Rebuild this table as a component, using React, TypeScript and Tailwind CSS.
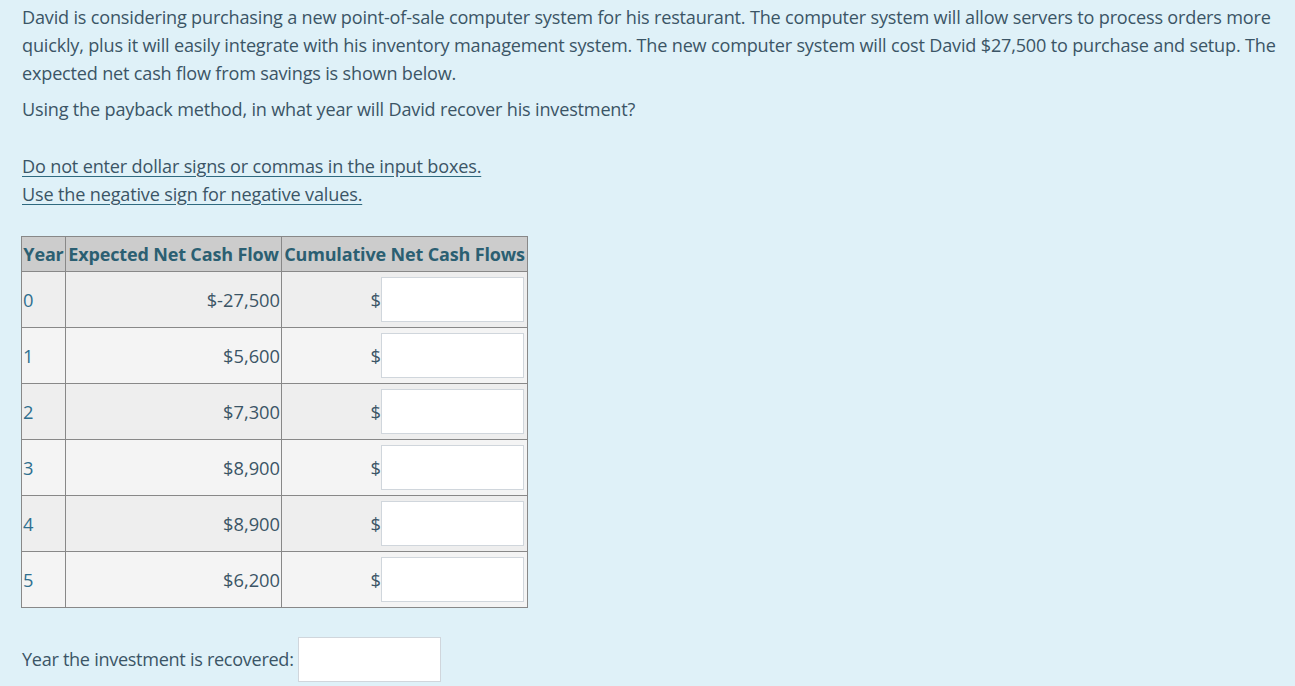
import React from "react";

const rows = [
  { y: "0", v: "$-27,500" },
  { y: "1", v: "$5,600" },
  { y: "2", v: "$7,300" },
  { y: "3", v: "$8,900" },
  { y: "4", v: "$8,900" },
  { y: "5", v: "$6,200" },
];

export default function App() {
  return (
    <div
      className="w-[1295px] h-[686px] overflow-hidden bg-[#dff1f8] text-[#3b5566] pl-[22px] pt-[3px]"
      style={{ fontFamily: '"Open Sans", "Noto Sans", sans-serif' }}
    >
      <p className="text-[18.1px] leading-[28px] tracking-[-0.19px]">
        David is considering purchasing a new point-of-sale computer system for his restaurant. The computer system will allow servers to process orders more quickly, plus it will easily integrate with his inventory management system. The new computer system will cost David $27,500 to purchase and setup. The expected net cash flow from savings is shown below.
      </p>
      <p className="mt-[8px] text-[18.1px] leading-[28px] tracking-[-0.19px]">
        Using the payback method, in what year will David recover his investment?
      </p>
      <div className="mt-[29px] text-[18.1px] leading-[28px] tracking-[-0.17px] underline decoration-[#2f6a80] underline-offset-[3px]">
        <div>Do not enter dollar signs or commas in the input boxes.</div>
        <div>Use the negative sign for negative values.</div>
      </div>
      <table className="mt-[28px] -ml-[1px] border-collapse border border-[#888] text-[18.3px]">
        <thead>
          <tr className="bg-[#cccccc] text-[#2b5f72] font-bold h-[35px] text-[18px] tracking-[-0.15px]">
            <th className="border border-[#888] px-0 font-bold w-[44px]">Year</th>
            <th className="border border-[#888] px-0 font-bold w-[216px]">Expected Net Cash Flow</th>
            <th className="border border-[#888] px-0 font-bold w-[246px]">Cumulative Net Cash Flows</th>
          </tr>
        </thead>
        <tbody>
          {rows.map((r, i) => (
            <tr key={r.y} className={i % 2 === 0 ? "bg-[#eeeeee] h-[56px]" : "bg-[#f4f4f4] h-[56px]"}>
              <td className="border border-[#888] pl-[1px] text-left text-[#2f6f8f]">{r.y}</td>
              <td className="border border-[#888] pr-[1px] text-right">{r.v}</td>
              <td className="border border-[#888] pr-[3px]">
                <div className="flex items-center justify-end">
                  <span>$</span>
                  <div className="w-[143px] h-[45px] bg-white border border-[#d0d6dc]" />
                </div>
              </td>
            </tr>
          ))}
        </tbody>
      </table>
      <div className="mt-[29px] flex items-center text-[18.1px] tracking-[-0.3px]">
        <span className="mr-[4px]">Year the investment is recovered:</span>
        <div className="w-[143px] h-[45px] bg-white border border-[#d0d6dc]" />
      </div>
    </div>
  );
}
